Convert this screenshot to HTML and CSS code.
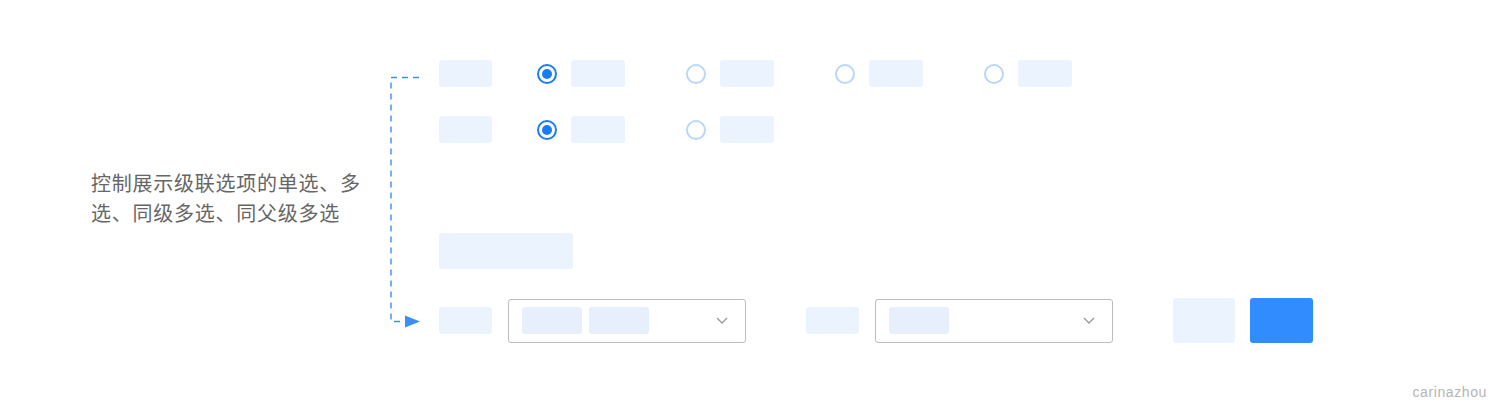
FILE: index.html
```html
<!DOCTYPE html>
<html lang="zh">
<head>
<meta charset="utf-8">
<title>级联选择</title>
<link rel="stylesheet" href="styles.css">
</head>
<body>
<div class="page">
  <div class="main">
    <p class="desc">控制展示级联选项的单选、多选、同级多选、同父级多选</p>
    <svg class="connector" width="34" height="270" viewBox="0 0 34 270">
      <path d="M31 17.5 H3 V261.5 H12" fill="none" stroke="#3d8ef6" stroke-width="1.4" stroke-dasharray="6 5"/>
      <polygon points="17,255.5 32,261.5 17,267.5" fill="#3d8ef6"/>
    </svg>
    <div class="content">
      <div class="row row-radio">
        <span class="ph label"></span>
        <div class="opt first"><span class="radio checked"></span><span class="ph opt-text"></span></div>
        <div class="opt"><span class="radio"></span><span class="ph opt-text"></span></div>
        <div class="opt"><span class="radio"></span><span class="ph opt-text"></span></div>
        <div class="opt"><span class="radio"></span><span class="ph opt-text"></span></div>
      </div>
      <div class="row row-radio second">
        <span class="ph label"></span>
        <div class="opt first"><span class="radio checked"></span><span class="ph opt-text"></span></div>
        <div class="opt"><span class="radio"></span><span class="ph opt-text"></span></div>
      </div>
      <div class="row row-title">
        <span class="ph title"></span>
      </div>
      <div class="row row-form">
        <span class="ph label"></span>
        <div class="select near">
          <span class="tag"></span>
          <span class="tag"></span>
          <svg class="chev" width="12" height="7" viewBox="0 0 12 7"><polyline points="1,1 6,6 11,1" fill="none" stroke="#999" stroke-width="1.3"/></svg>
        </div>
        <span class="ph label far"></span>
        <div class="select near">
          <span class="tag"></span>
          <svg class="chev" width="12" height="7" viewBox="0 0 12 7"><polyline points="1,1 6,6 11,1" fill="none" stroke="#999" stroke-width="1.3"/></svg>
        </div>
        <span class="btn light far"></span>
        <span class="btn primary"></span>
      </div>
    </div>
  </div>
  <div class="footer">carinazhou</div>
</div>
</body>
</html>
```
FILE: styles.css
```css
html, body {
  margin: 0;
  padding: 0;
  background: #ffffff;
}

.page {
  width: 1492px;
  height: 403px;
  box-sizing: border-box;
  padding-top: 60px;
  display: flex;
  flex-direction: column;
}

.main {
  display: flex;
  align-items: flex-start;
  padding-left: 91px;
}

.desc {
  width: 275px;
  margin: 108px 0 0 0;
  font-family: "Noto Sans CJK SC", "Noto Sans", sans-serif;
  font-size: 20px;
  line-height: 30px;
  letter-spacing: 0.75px;
  color: #666666;
}

.connector {
  flex-shrink: 0;
  margin-left: 22px;
  display: block;
}

.content {
  margin-left: 17px;
  display: flex;
  flex-direction: column;
}

.row {
  display: flex;
  align-items: center;
}

.row-radio {
  height: 27px;
}

.row-radio.second {
  margin-top: 29px;
}

.row-title {
  margin-top: 90px;
}

.row-form {
  margin-top: 29px;
  height: 45px;
}

.ph {
  display: block;
  background: #ebf3fe;
  border-radius: 3px;
}

.label {
  width: 53px;
  height: 27px;
}

.opt {
  display: flex;
  align-items: center;
  gap: 14px;
  margin-left: 61px;
}

.opt.first {
  margin-left: 45px;
}

.opt-text {
  width: 54px;
  height: 27px;
}

.radio {
  display: block;
  width: 20px;
  height: 20px;
  box-sizing: border-box;
  border: 2px solid #bad6f8;
  border-radius: 50%;
  position: relative;
}

.radio.checked {
  border-color: #1a7cf0;
}

.radio.checked::after {
  content: "";
  position: absolute;
  left: 3px;
  top: 3px;
  width: 10px;
  height: 10px;
  border-radius: 50%;
  background: #1a7cf0;
}

.title {
  width: 134px;
  height: 36px;
}

.select {
  width: 238px;
  height: 44px;
  box-sizing: border-box;
  border: 1px solid #bdbdbd;
  border-radius: 3px;
  display: flex;
  align-items: center;
  gap: 7px;
  padding: 0 17px 0 13px;
}

.near {
  margin-left: 16px;
}

.far {
  margin-left: 60px;
}

.tag {
  display: block;
  width: 60px;
  height: 27px;
  border-radius: 3px;
  background: #e6effb;
}

.chev {
  display: block;
  margin-left: auto;
}

.btn {
  display: block;
  height: 45px;
  border-radius: 3px;
}

.btn.light {
  width: 62px;
  background: #ebf3fe;
}

.btn.primary {
  width: 63px;
  margin-left: 15px;
  background: #318cfe;
}

.footer {
  margin-top: auto;
  padding: 0 5px 3px 0;
  text-align: right;
  font-family: "Liberation Sans", Arial, sans-serif;
  font-size: 14px;
  line-height: 16px;
  letter-spacing: 0.6px;
  color: #b5b5b5;
}
```
